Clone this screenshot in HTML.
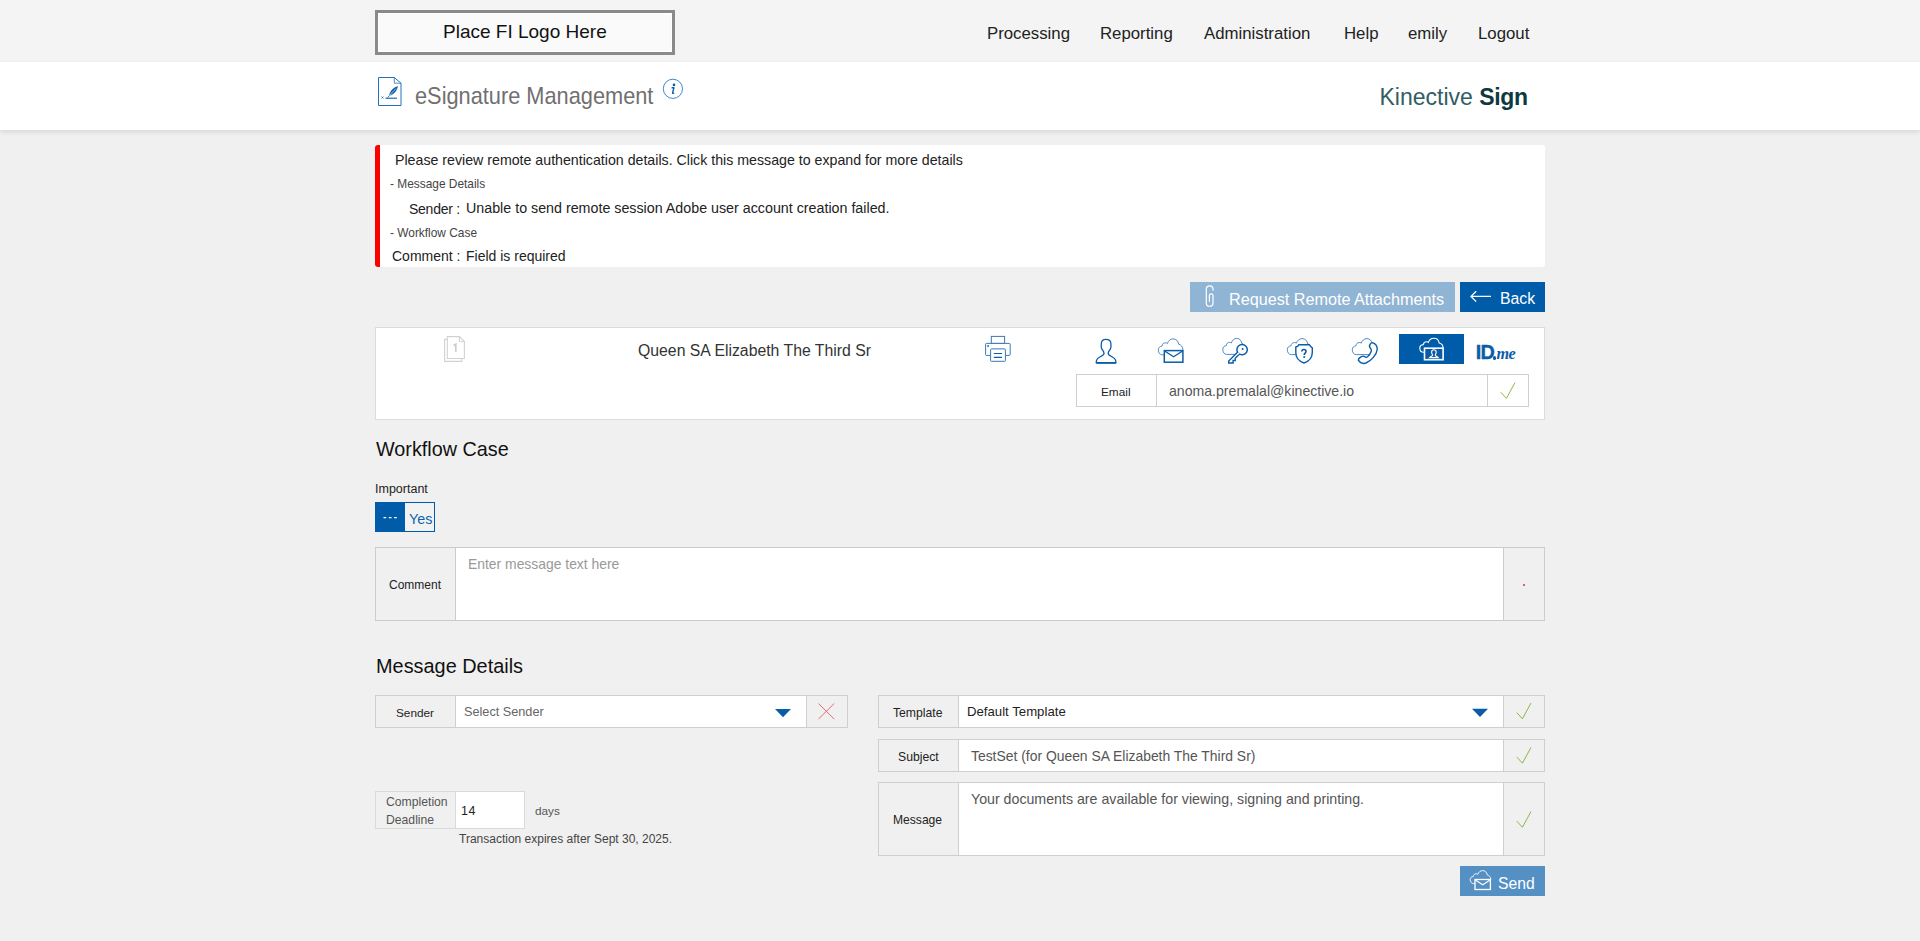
<!DOCTYPE html><html><head><meta charset="utf-8"><style>
html,body{margin:0;padding:0;}
body{width:1920px;height:941px;overflow:hidden;background:#f0f0f0;position:relative;font-family:"Liberation Sans",sans-serif;}
.t{position:absolute;line-height:1;white-space:pre;}
.r{position:absolute;box-sizing:border-box;}
svg{position:absolute;overflow:visible;}
</style></head><body>
<div class="r" style="left:0px;top:0px;width:1920px;height:62px;background:#f4f4f4"></div>
<div class="r" style="left:375px;top:10px;width:300px;height:45px;border:3px solid #8a8a8a;background:#fafafa;box-shadow:inset 0 0 0 1px #fff"></div>
<div class="t " style="left:443px;top:22.42px;font-size:19px;color:#111;font-weight:400;letter-spacing:0px">Place FI Logo Here</div>
<div class="t " style="left:987px;top:25.78px;font-size:16.8px;color:#222;font-weight:400;">Processing</div>
<div class="t " style="left:1100px;top:25.78px;font-size:16.8px;color:#222;font-weight:400;">Reporting</div>
<div class="t " style="left:1204px;top:25.78px;font-size:16.8px;color:#222;font-weight:400;">Administration</div>
<div class="t " style="left:1344px;top:25.78px;font-size:16.8px;color:#222;font-weight:400;">Help</div>
<div class="t " style="left:1408px;top:25.78px;font-size:16.8px;color:#222;font-weight:400;">emily</div>
<div class="t " style="left:1478px;top:25.78px;font-size:16.8px;color:#222;font-weight:400;">Logout</div>
<div class="r" style="left:0px;top:62px;width:1920px;height:68px;background:#fff;box-shadow:0 2px 5px rgba(0,0,0,0.115)"></div>
<div class="t " style="left:414.5px;top:84.31px;font-size:24.2px;color:#707070;font-weight:400;transform:scaleX(0.9);transform-origin:0 0">eSignature Management</div>
<div class="t " style="left:1379.5px;top:85.53px;font-size:23px;color:#0d3940;font-weight:400;"><span style="color:#2f5d63">Kinective</span> <b style="font-weight:700;letter-spacing:-0.3px">Sign</b></div>
<div class="r" style="left:375px;top:145px;width:1170px;height:122px;background:#fff;border-left:5px solid #f00;border-radius:3px"></div>
<div class="t " style="left:395px;top:153.28px;font-size:14.2px;color:#222;font-weight:400;">Please review remote authentication details. Click this message to expand for more details</div>
<div class="t " style="left:390px;top:179.43px;font-size:11.9px;color:#444;font-weight:400;">- Message Details</div>
<div class="t " style="left:409px;top:201.65px;font-size:14.0px;color:#222;font-weight:400;letter-spacing:-0.25px">Sender :</div>
<div class="t " style="left:466px;top:201.41px;font-size:14.28px;color:#222;font-weight:400;">Unable to send remote session Adobe user account creation failed.</div>
<div class="t " style="left:390px;top:227.83px;font-size:11.9px;color:#444;font-weight:400;">- Workflow Case</div>
<div class="t " style="left:392px;top:248.95px;font-size:14.0px;color:#222;font-weight:400;">Comment :</div>
<div class="t " style="left:466px;top:248.95px;font-size:14.0px;color:#222;font-weight:400;">Field is required</div>
<div class="r" style="left:1190px;top:282px;width:265px;height:30px;background:#90b4d4"></div>
<div class="t " style="left:1229px;top:291.09px;font-size:16.2px;color:#fff;font-weight:400;">Request Remote Attachments</div>
<div class="r" style="left:1460px;top:282px;width:85px;height:30px;background:#005ca8"></div>
<div class="t " style="left:1500px;top:291.43px;font-size:15.8px;color:#fff;font-weight:400;">Back</div>
<div class="r" style="left:375px;top:327px;width:1170px;height:93px;background:#fff;border:1px solid #dcdcdc"></div>
<div class="t " style="left:638px;top:342.83px;font-size:15.8px;color:#333;font-weight:400;">Queen SA Elizabeth The Third Sr</div>
<div class="r" style="left:1076px;top:374px;width:453px;height:33px;background:#fff;border:1px solid #cfcfcf"></div>
<div class="r" style="left:1156px;top:374px;width:332px;height:33px;border-left:1px solid #cfcfcf;border-right:1px solid #cfcfcf"></div>
<div class="t " style="left:1101px;top:386.91px;font-size:11.8px;color:#222;font-weight:400;">Email</div>
<div class="t " style="left:1169px;top:384.46px;font-size:14.1px;color:#555;font-weight:400;">anoma.premalal@kinective.io</div>
<div class="r" style="left:1399px;top:334px;width:65px;height:30px;background:#005ca8"></div>
<div class="t " style="left:1475.8px;top:343.04px;font-size:19.8px;color:#0b5ca8;font-weight:700;letter-spacing:-0.9px;-webkit-text-stroke:0.35px #0b5ca8">ID</div>
<div class="r" style="left:1492.8px;top:356.3px;width:3.2000000000000455px;height:3.3999999999999773px;background:#0b5ca8;border-radius:1.6px"></div>
<div class="t " style="left:1496.6px;top:346.09px;font-size:16.2px;color:#0b5ca8;font-weight:700;font-style:italic;letter-spacing:-0.8px;font-family:'Liberation Serif',serif">me</div>
<div class="t " style="left:376px;top:440.14px;font-size:19.8px;color:#111;font-weight:400;">Workflow Case</div>
<div class="t " style="left:375px;top:482.62px;font-size:12.5px;color:#222;font-weight:400;">Important</div>
<div class="r" style="left:375px;top:502px;width:60px;height:30px;background:#f2f2f2;border:1px solid #005ca8"></div>
<div class="r" style="left:375px;top:502px;width:30px;height:30px;background:#005ca8"></div>
<div class="t " style="left:409px;top:511.90px;font-size:14.3px;color:#0d62b0;font-weight:400;">Yes</div>
<div class="r" style="left:375px;top:547px;width:1170px;height:74px;background:#f0f0f0;border:1px solid #cccccc"></div>
<div class="r" style="left:455px;top:547px;width:1049px;height:74px;background:#fff;border:1px solid #cccccc"></div>
<div class="t " style="left:389px;top:578.84px;font-size:12.0px;color:#222;font-weight:400;">Comment</div>
<div class="t " style="left:468px;top:558.13px;font-size:13.9px;color:#999;font-weight:400;">Enter message text here</div>
<div class="r" style="left:1522.6px;top:583.6px;width:2.800000000000182px;height:2.7999999999999545px;background:#d6304a;border-radius:1.4px"></div>
<div class="t " style="left:376px;top:657.05px;font-size:19.9px;color:#111;font-weight:400;">Message Details</div>
<div class="r" style="left:375px;top:695px;width:473px;height:33px;background:#f0f0f0;border:1px solid #cfcfcf"></div>
<div class="r" style="left:455px;top:695px;width:352px;height:33px;background:#fff;border:1px solid #cfcfcf"></div>
<div class="t " style="left:396px;top:708.11px;font-size:11.8px;color:#222;font-weight:400;">Sender</div>
<div class="t " style="left:464px;top:706.15px;font-size:12.7px;color:#666;font-weight:400;">Select Sender</div>
<div class="r" style="left:375px;top:791px;width:150px;height:38px;background:#f0f0f0;border:1px solid #dadada"></div>
<div class="r" style="left:455px;top:791px;width:70px;height:38px;background:#fff;border:1px solid #dadada"></div>
<div class="t " style="left:386px;top:796.07px;font-size:12.2px;color:#555;font-weight:400;">Completion</div>
<div class="t " style="left:386px;top:814.27px;font-size:12.2px;color:#555;font-weight:400;">Deadline</div>
<div class="t " style="left:461px;top:805.22px;font-size:12.5px;color:#222;font-weight:400;letter-spacing:0.6px">14</div>
<div class="t " style="left:535px;top:805.81px;font-size:11.8px;color:#555;font-weight:400;">days</div>
<div class="t " style="left:459px;top:832.94px;font-size:12.0px;color:#444;font-weight:400;">Transaction expires after Sept 30, 2025.</div>
<div class="r" style="left:878px;top:695px;width:667px;height:33px;background:#f0f0f0;border:1px solid #cfcfcf"></div>
<div class="r" style="left:958px;top:695px;width:546px;height:33px;background:#fff;border:1px solid #cfcfcf"></div>
<div class="r" style="left:878px;top:739px;width:667px;height:33px;background:#f0f0f0;border:1px solid #cfcfcf"></div>
<div class="r" style="left:958px;top:739px;width:546px;height:33px;background:#fff;border:1px solid #cfcfcf"></div>
<div class="r" style="left:878px;top:782px;width:667px;height:74px;background:#f0f0f0;border:1px solid #cfcfcf"></div>
<div class="r" style="left:958px;top:782px;width:546px;height:74px;background:#fff;border:1px solid #cfcfcf"></div>
<div class="t " style="left:893px;top:706.57px;font-size:12.2px;color:#222;font-weight:400;">Template</div>
<div class="t " style="left:967px;top:704.73px;font-size:13.2px;color:#222;font-weight:400;">Default Template</div>
<div class="t " style="left:898px;top:750.57px;font-size:12.2px;color:#222;font-weight:400;">Subject</div>
<div class="t " style="left:971px;top:750.43px;font-size:13.9px;color:#555;font-weight:400;">TestSet (for Queen SA Elizabeth The Third Sr)</div>
<div class="t " style="left:893px;top:813.66px;font-size:12.1px;color:#222;font-weight:400;">Message</div>
<div class="t " style="left:971px;top:792.18px;font-size:14.2px;color:#555;font-weight:400;">Your documents are available for viewing, signing and printing.</div>
<div class="r" style="left:1460px;top:866px;width:85px;height:30px;background:#5490c4"></div>
<div class="t " style="left:1498px;top:876.01px;font-size:15.7px;color:#fff;font-weight:400;">Send</div>
<svg width="1920" height="941" style="left:0;top:0" viewBox="0 0 1920 941"><path d="M378.5 77.5 H394.3 L401 83.2 V105.5 H378.5 Z" fill="#fff" stroke="#2270bd" stroke-width="1.0"/><path d="M394.3 77.5 V83.2 H401" fill="none" stroke="#2270bd" stroke-width="0.8"/><path d="M385.5 98.2 H397" stroke="#0b5ca8" stroke-width="1.1"/><path d="M381.5 96.6 L383.4 98.5 M383.4 96.6 L381.5 98.5" stroke="#0b5ca8" stroke-width="0.8"/><path d="M389.4 95.4 C 390.2 91.2, 393.2 87.8, 397.6 86.5 C 396.8 90.8, 393.6 94.4, 390 95.2 Z" fill="#0b5ca8" stroke="#0b5ca8" stroke-width="0.5"/><path d="M388.3 96.8 L395.8 88.6" stroke="#fff" stroke-width="0.6"/><path d="M387.6 97.6 L389.4 95.6" stroke="#0b5ca8" stroke-width="0.8"/><circle cx="672.9" cy="88.8" r="9.6" fill="none" stroke="#2a7cc4" stroke-width="0.9"/><circle cx="674" cy="84.9" r="1.3" fill="#0b5ca8"/><path d="M671.6 87.8 H673.9 L672.6 92.9 C672.5 93.5 673.2 93.6 674.3 93" fill="none" stroke="#0b5ca8" stroke-width="1.4" stroke-linejoin="round"/><path d="M1213 290.8 V289.3 A3.35 3.35 0 0 0 1206.3 289.3 V302.9 A3.35 3.35 0 0 0 1213 302.9 V295.6 A1.8 1.8 0 0 0 1209.4 295.6 V301.8" fill="none" stroke="#fff" stroke-width="1.2"/><path d="M1471 296.4 H1491 M1476.2 291.2 L1471 296.4 L1476.2 301.6" fill="none" stroke="#fff" stroke-width="1.3"/><path d="M447.3 339.4 H444.6 V361.4 H461.8 V358.6" fill="none" stroke="#d2d2d2" stroke-width="1.1"/><path d="M447.3 336.6 H459.4 L464.4 341.6 V358.5 H447.3 Z" fill="#fff" stroke="#d2d2d2" stroke-width="1.1"/><path d="M459.4 336.6 V341.6 H464.4" fill="none" stroke="#d2d2d2" stroke-width="1"/><path d="M453.6 345.4 L455.8 344.2 V351.8" fill="none" stroke="#cccccc" stroke-width="1.7"/><rect x="991.3" y="336.4" width="13.3" height="7" fill="none" stroke="#3a78b8" stroke-width="1"/><rect x="985.6" y="343.4" width="24.6" height="12" rx="0.8" fill="#fff" stroke="#3a78b8" stroke-width="1"/><rect x="990.6" y="348.9" width="14.8" height="12.4" rx="0.8" fill="#fff" stroke="#3a78b8" stroke-width="1"/><path d="M994.3 353.5 H1001.6 M994.3 357.3 H1001.6" stroke="#0b5ca8" stroke-width="1.2" stroke-linecap="round"/><rect x="987.3" y="345.2" width="1.6" height="1.6" fill="#0b5ca8"/><path d="M1106 339.3 C1102.6 339.3 1101.3 341.6 1101.3 344 C1101.3 345.8 1100.9 346.8 1101.6 348.4 C1102.3 350.2 1103.9 351.2 1104 353.4 C1104 354.8 1102.6 355.6 1099.8 357 C1097.2 358.3 1096.2 359.6 1096.2 362.7 H1116 C1116 359.6 1115 358.3 1112.4 357 C1109.6 355.6 1108.2 354.8 1108.2 353.4 C1108.3 351.2 1109.9 350.2 1110.6 348.4 C1111.3 346.8 1110.9 345.8 1110.9 344 C1110.9 341.6 1109.6 339.3 1106 339.3 Z" fill="none" stroke="#0b5ca8" stroke-width="1.3"/><path d="M1096.2 363 H1116" stroke="#0b5ca8" stroke-width="1.6"/><path d="M1162.38 354.90 C1159.83 354.90 1158.30 352.70 1158.30 349.90 C1158.30 347.70 1159.93 346.30 1161.97 346.10 C1162.28 344.00 1163.71 342.80 1165.45 342.80 C1166.26 342.80 1166.88 343.10 1167.39 343.50 C1168.30 340.70 1170.55 338.90 1173.10 338.90 C1176.16 338.90 1178.31 341.10 1178.72 344.20 C1181.17 344.80 1182.80 346.90 1182.80 349.50 C1182.80 352.60 1180.76 354.90 1177.70 354.90 Z" fill="none" stroke="#3d7dbd" stroke-width="0.9" /><rect x="1164.3" y="350.6" width="18.6" height="11.6" fill="#fff" stroke="#0b5ca8" stroke-width="1.5"/><path d="M1164.6 351 L1173.6 356.8 L1182.6 351" fill="none" stroke="#0b5ca8" stroke-width="1.3"/><path d="M1226.63 354.40 C1224.24 354.40 1222.80 352.20 1222.80 349.40 C1222.80 347.20 1224.33 345.80 1226.25 345.60 C1226.54 343.50 1227.88 342.30 1229.51 342.30 C1230.27 342.30 1230.85 342.60 1231.33 343.00 C1232.19 340.20 1234.30 338.40 1236.70 338.40 C1239.57 338.40 1241.58 340.60 1241.97 343.70 C1244.27 344.30 1245.80 346.40 1245.80 349.00 C1245.80 352.10 1243.88 354.40 1241.01 354.40 Z" fill="none" stroke="#3d7dbd" stroke-width="0.9" /><path d="M1237.3 352.4 L1228.7 361 V363 H1233.1 V360.5 H1235.2 V358.2 L1239.6 354" fill="#fff" stroke="#0b5ca8" stroke-width="1.4" stroke-linejoin="miter"/><circle cx="1242.1" cy="349.6" r="5.2" fill="#fff" stroke="#0b5ca8" stroke-width="1.5"/><path d="M1237.9 352.9 L1239 354" stroke="#fff" stroke-width="1.6"/><circle cx="1242.6" cy="349" r="1" fill="#0b5ca8"/><path d="M1291.38 354.60 C1288.83 354.60 1287.30 352.40 1287.30 349.60 C1287.30 347.40 1288.93 346.00 1290.97 345.80 C1291.28 343.70 1292.71 342.50 1294.45 342.50 C1295.26 342.50 1295.88 342.80 1296.39 343.20 C1297.30 340.40 1299.55 338.60 1302.10 338.60 C1305.16 338.60 1307.31 340.80 1307.72 343.90 C1310.17 344.50 1311.80 346.60 1311.80 349.20 C1311.80 352.30 1309.76 354.60 1306.70 354.60 Z" fill="none" stroke="#3d7dbd" stroke-width="0.9" /><path d="M1295.8 347 C1297.5 346.6 1298.2 345.8 1298.8 344.8 H1309.4 C1310 346 1311 347.3 1312.3 347.8 V352.5 C1312.3 357.5 1309 361.3 1304 363 C1299 361.3 1295.8 357.5 1295.8 352.5 Z" fill="#fff" stroke="#0b5ca8" stroke-width="1.4"/><path d="M1301.8 351.6 C1301.8 350.2 1302.8 349.5 1303.9 349.5 C1305.1 349.5 1306 350.3 1306 351.4 C1306 353 1304.2 353.2 1304.2 355 " fill="none" stroke="#0b5ca8" stroke-width="1.6"/><rect x="1303.3" y="356.2" width="1.9" height="1.6" fill="#0b5ca8"/><path d="M1356.30 354.60 C1353.80 354.60 1352.30 352.40 1352.30 349.60 C1352.30 347.40 1353.90 346.00 1355.90 345.80 C1356.20 343.70 1357.60 342.50 1359.30 342.50 C1360.10 342.50 1360.70 342.80 1361.20 343.20 C1362.10 340.40 1364.30 338.60 1366.80 338.60 C1369.80 338.60 1371.90 340.80 1372.30 343.90 C1374.70 344.50 1376.30 346.60 1376.30 349.20 C1376.30 352.30 1374.30 354.60 1371.30 354.60 Z" fill="none" stroke="#3d7dbd" stroke-width="0.9" /><path d="M1372.2 342.6 C1375 343.4 1377.4 346 1377.2 349.5 C1376.8 354.5 1371 361 1366 363 C1363 364 1359.8 362.6 1358.3 360.2 C1358.2 359 1359.2 357.8 1360.8 357 C1362 356.3 1363.4 355.7 1364.6 356.6 C1365.5 357.4 1366.5 357.6 1367.6 356.8 C1369.5 355 1370.6 353 1371.3 351 C1371.6 350 1371.2 349 1370.4 348.2 C1369.4 347.2 1369.4 345.4 1370 344.4 C1370.6 343.4 1371.2 342.6 1372.2 342.6 Z" fill="#fff" stroke="#0b5ca8" stroke-width="1.4"/><path d="M1423.67 352.30 C1421.25 352.30 1419.80 350.38 1419.80 347.93 C1419.80 346.00 1421.35 344.78 1423.28 344.60 C1423.57 342.76 1424.92 341.71 1426.57 341.71 C1427.34 341.71 1427.92 341.98 1428.40 342.32 C1429.27 339.88 1431.40 338.30 1433.82 338.30 C1436.72 338.30 1438.75 340.23 1439.13 342.94 C1441.45 343.46 1443.00 345.30 1443.00 347.57 C1443.00 350.29 1441.07 352.30 1438.17 352.30 Z" fill="none" stroke="#fff" stroke-width="1.1" /><rect x="1424.5" y="348.2" width="18.6" height="11.5" fill="#0b5ca8" stroke="#fff" stroke-width="1.6"/><path d="M1433.9 349.8 C1432.2 349.8 1431.6 351 1431.6 352.3 C1431.6 353.8 1432.6 354.5 1432.6 355.3 C1432.6 356 1430.8 356.4 1429.6 357.6 H1438.2 C1437 356.4 1435.2 356 1435.2 355.3 C1435.2 354.5 1436.2 353.8 1436.2 352.3 C1436.2 351 1435.6 349.8 1433.9 349.8 Z" fill="none" stroke="#fff" stroke-width="1.1"/><path d="M1500.8 392.20000000000005 L1506.3999999999999 398.40000000000003 L1515.0 382.6" fill="none" stroke="#86b43a" stroke-width="0.95"/><path d="M1516.8 712.6 L1522.3999999999999 718.8 L1531.0 703" fill="none" stroke="#86b43a" stroke-width="0.95"/><path d="M1516.8 757.0 L1522.3999999999999 763.1999999999999 L1531.0 747.4" fill="none" stroke="#86b43a" stroke-width="0.95"/><path d="M1516.8 821.1 L1522.3999999999999 827.3 L1531.0 811.5" fill="none" stroke="#86b43a" stroke-width="0.95"/><path d="M775 709 H791 L783 717.2 Z" fill="#0b5ca8"/><path d="M1472 708.8 H1488 L1480 717.0 Z" fill="#0b5ca8"/><path d="M818.5 703.5 L834.2 719 M834.2 703.5 L818.5 719" stroke="#e46470" stroke-width="0.95"/><path d="M383.5 517.6 H386.2 M388.8 517.6 H391.5 M394.1 517.6 H396.8" stroke="#fff" stroke-width="1.2"/><path d="M1473.62 883.60 C1471.48 883.60 1470.20 881.81 1470.20 879.54 C1470.20 877.75 1471.57 876.61 1473.28 876.45 C1473.53 874.74 1474.73 873.77 1476.18 873.77 C1476.86 873.77 1477.38 874.01 1477.80 874.34 C1478.57 872.06 1480.45 870.60 1482.59 870.60 C1485.15 870.60 1486.94 872.39 1487.28 874.91 C1489.33 875.39 1490.70 877.10 1490.70 879.21 C1490.70 881.73 1488.99 883.60 1486.43 883.60 Z" fill="none" stroke="#fff" stroke-width="0.9" /><rect x="1475" y="879.5" width="15.4" height="10" fill="#5490c4" stroke="#fff" stroke-width="1.3"/><path d="M1475.3 880 L1482.7 884.8 L1490.1 880" fill="none" stroke="#fff" stroke-width="1.2"/></svg></body></html>
